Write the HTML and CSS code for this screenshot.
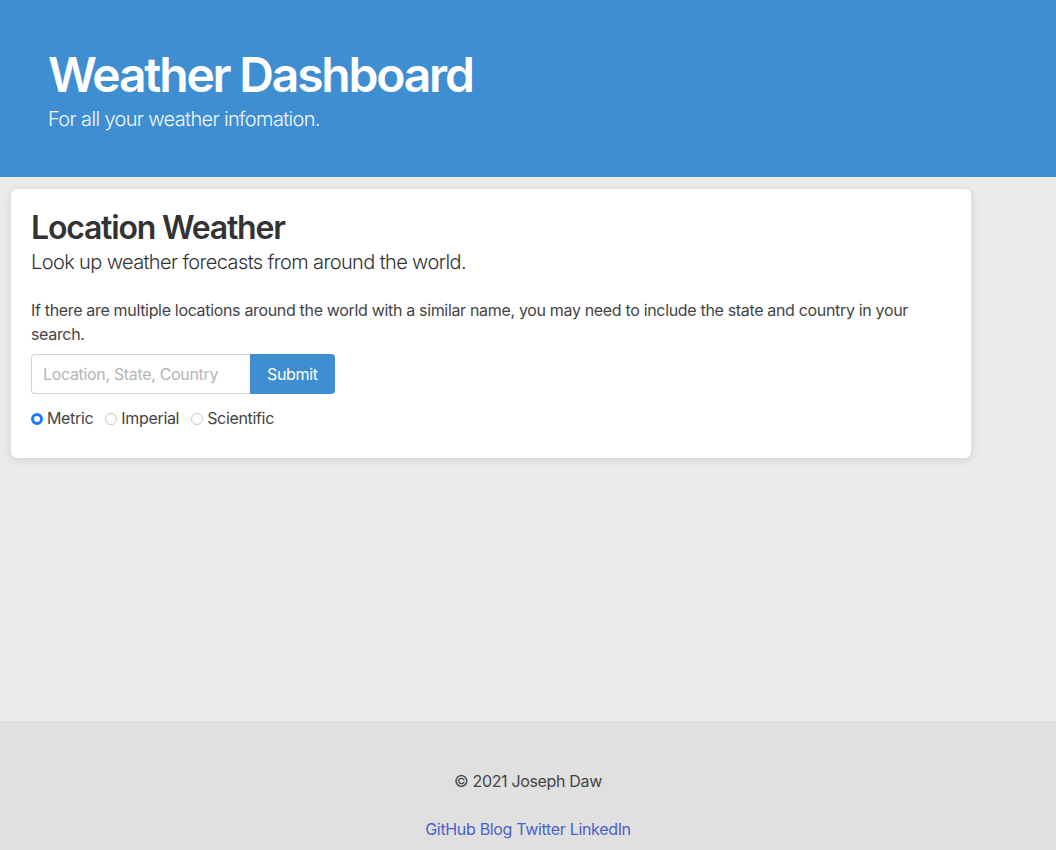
FILE: index.html
```html
<!DOCTYPE html>
<html lang="en">
<head>
<meta charset="utf-8">
<title>Weather Dashboard</title>
<link rel="stylesheet" href="styles.css">
</head>
<body>
<header class="hero">
  <h1 class="hero-title">Weather Dashboard</h1>
  <p class="hero-sub">For all your weather infomation.</p>
</header>
<main class="main">
  <section class="card">
    <h2 class="card-title">Location Weather</h2>
    <p class="lead">Look up weather forecasts from around the world.</p>
    <p class="note">If there are multiple locations around the world with a similar name, you may need to include the state and country in your search.</p>
    <form class="search">
      <input class="search-input" type="text" placeholder="Location, State, Country">
      <button class="search-btn" type="button">Submit</button>
    </form>
    <div class="units">
      <label class="unit"><input type="radio" name="u" checked><span>Metric</span></label>
      <label class="unit"><input type="radio" name="u"><span>Imperial</span></label>
      <label class="unit"><input type="radio" name="u"><span>Scientific</span></label>
    </div>
  </section>
</main>
<footer class="footer">
  <p class="copy">© 2021 Joseph Daw</p>
  <p class="links"><a href="#">GitHub</a> <a href="#">Blog</a> <a href="#">Twitter</a> <a href="#">LinkedIn</a></p>
</footer>
</body>
</html>
```

FILE: styles.css
```css
* { box-sizing: border-box; }
html, body { margin: 0; padding: 0; }
body {
  font-family: Inter, "Noto Sans", Roboto, sans-serif;
  background: #ebebeb;
  color: #444;
  font-size: 16px;
  line-height: 1.5;
  letter-spacing: -0.33px;
}
.hero {
  background: #3f8ed1;
  color: #fff;
  padding: 46px 48px 45px;
  height: 177px;
}
.hero-title {
  margin: 0;
  font-size: 48px;
  line-height: 1.2;
  font-weight: 600;
  letter-spacing: -2.2px;
}
.hero-sub {
  margin: 0;
  font-size: 20px;
  line-height: 30px;
  font-weight: 300;
  letter-spacing: -0.65px;
  color: #f2f7fc;
}
.main {
  min-height: 544px;
  padding: 12px 0 0 11px;
}
.card {
  width: 960px;
  background: #fff;
  border-radius: 6px;
  box-shadow: 0 2px 10px rgba(0,0,0,0.12);
  padding: 20px 20px 28px;
}
.card-title {
  margin: 0;
  font-size: 32px;
  line-height: 1.2;
  font-weight: 600;
  letter-spacing: -1.2px;
  color: #333;
}
.lead {
  margin: 0 0 21px;
  font-size: 20px;
  line-height: 30px;
  font-weight: 300;
  letter-spacing: -0.62px;
  color: #333;
}
.note {
  margin: 0 0 8px;
  font-size: 16px;
  line-height: 24px;
  color: #444;
}
.search {
  display: flex;
  height: 40px;
  margin-bottom: 12px;
}
.search-input {
  width: 219px;
  height: 40px;
  border: 1px solid #d4d4d4;
  border-right: 0;
  border-radius: 4px 0 0 4px;
  padding: 0 11px;
  font: inherit;
  font-size: 16px;
  letter-spacing: -0.33px;
  color: #333;
  outline: none;
}
.search-input::placeholder { color: #b5b5b5; }
.search-btn {
  height: 40px;
  background: #3f8ed1;
  color: #fff;
  border: 0;
  border-radius: 0 4px 4px 0;
  padding: 0 17px;
  font: inherit;
  font-size: 16px;
  letter-spacing: -0.33px;
}
.units {
  display: flex;
  gap: 12px;
  line-height: 24px;
}
.unit {
  display: flex;
  align-items: center;
  gap: 4px;
  color: #444;
}
.unit input {
  appearance: none;
  -webkit-appearance: none;
  width: 12px;
  height: 12px;
  margin: 1px 0 0;
  border: 1px solid #c8c8c8;
  border-radius: 50%;
  background: #fff;
}
.unit input:checked {
  border: 3.5px solid #1a7cf5;
  background: #fff;
}
.footer {
  background: #e0e0e0;
  text-align: center;
  padding: 48px 0 9px;
}
.copy {
  margin: 0 0 24px;
  color: #444;
}
.links { margin: 0; }
.links a {
  color: #4a62c6;
  text-decoration: none;
}
```
